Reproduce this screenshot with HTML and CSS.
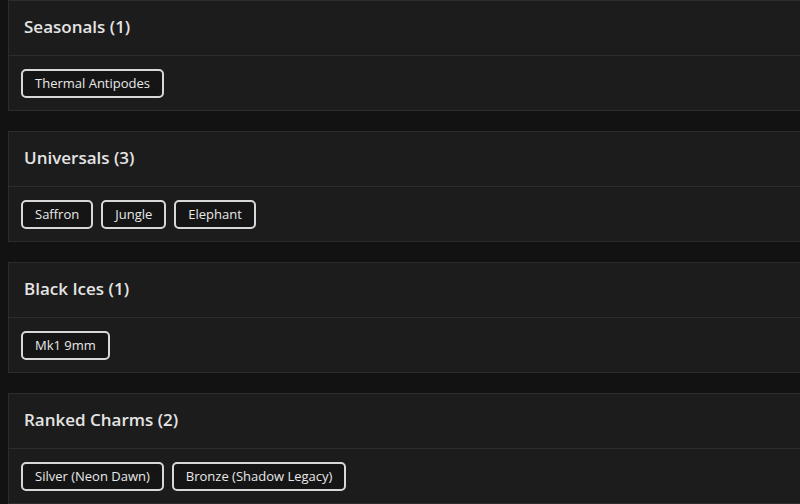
FILE: index.html
```html
<!DOCTYPE html>
<html>
<head>
<meta charset="utf-8">
<link rel="stylesheet" href="styles.css">
</head>
<body>
<main class="list">
  <section class="card">
    <header class="card-head"><h2 class="card-title">Seasonals (1)</h2></header>
    <div class="card-body">
      <span class="chip">Thermal Antipodes</span>
    </div>
  </section>
  <section class="card">
    <header class="card-head"><h2 class="card-title">Universals (3)</h2></header>
    <div class="card-body">
      <span class="chip">Saffron</span>
      <span class="chip">Jungle</span>
      <span class="chip">Elephant</span>
    </div>
  </section>
  <section class="card">
    <header class="card-head"><h2 class="card-title">Black Ices (1)</h2></header>
    <div class="card-body">
      <span class="chip">Mk1 9mm</span>
    </div>
  </section>
  <section class="card">
    <header class="card-head"><h2 class="card-title">Ranked Charms (2)</h2></header>
    <div class="card-body">
      <span class="chip">Silver (Neon Dawn)</span>
      <span class="chip">Bronze (Shadow Legacy)</span>
    </div>
  </section>
</main>
</body>
</html>
```
FILE: styles.css
```css
html, body {
  margin: 0;
  padding: 0;
  background: #121212;
  overflow: hidden;
}
body {
  font-family: "Open Sans", "Noto Sans", sans-serif;
  color: #e6e6e6;
}
.list {
  display: flex;
  flex-direction: column;
  gap: 20px;
  margin-left: 8px;
  width: 800px;
}
.card {
  background: #1c1c1c;
  border: 1px solid #2c2c2c;
}
.card-head {
  height: 55px;
  display: flex;
  align-items: center;
  padding: 0 15px 4px;
  box-sizing: border-box;
  border-bottom: 1px solid #2c2c2c;
}
.card-title {
  margin: 0;
  font-size: 17px;
  font-weight: 600;
  color: #e4e4e4;
  letter-spacing: 0;
}
.card-body {
  height: 54px;
  display: flex;
  align-items: center;
  gap: 8px;
  padding: 0 12px;
  box-sizing: border-box;
}
.chip {
  display: inline-flex;
  align-items: center;
  height: 29px;
  box-sizing: border-box;
  padding: 0 12px;
  border: 2px solid #d8d8d8;
  border-radius: 5px;
  background: #151515;
  font-size: 13px;
  font-weight: 500;
  letter-spacing: 0;
  color: #e8e8e8;
}
```
